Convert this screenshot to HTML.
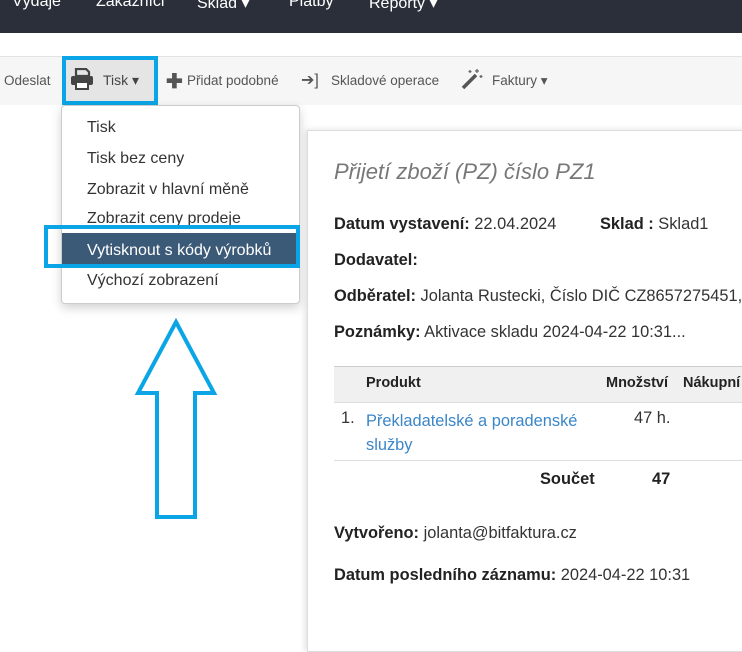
<!DOCTYPE html>
<html><head><meta charset="utf-8"><style>
body{margin:0;width:742px;height:627px;overflow:hidden;background:#fff;font-family:"Liberation Sans",sans-serif;position:relative;color:#333}
.nav{position:absolute;left:0;top:0;width:742px;height:33px;background:#2a2f3a;color:#fff;font-size:16px}
.nav span{position:absolute;top:-7px}
.tb{position:absolute;left:0;top:56px;width:742px;height:48px;background:#f6f6f6;border-top:1px solid #e3e3e3;font-size:13.5px;color:#555}
.tb span{position:absolute;top:16px}
.tisk{position:absolute;left:62px;top:56px;width:88px;height:41px;background:#e5e5e5;border:4px solid #0aa5e6;box-sizing:content-box}
.dd{position:absolute;left:61px;top:105px;width:237px;height:197px;background:#fff;border:1px solid #ccc;border-radius:4px;box-shadow:0 4px 10px rgba(0,0,0,.18);font-size:16px}
.dd div{position:absolute;left:25px}
.hl{position:absolute;left:62px;top:233px;width:236px;height:33px;background:#3b5a78}
.hlb{position:absolute;left:44px;top:225px;width:248px;height:35px;border:4px solid #0aa5e6}
.panel{position:absolute;left:307px;top:130px;width:460px;height:520px;background:#fff;border:1px solid #ddd;box-shadow:-2px 0 6px rgba(0,0,0,.12);font-size:16.4px}
.panel .t{position:absolute;white-space:nowrap}
b{font-weight:bold;color:#222}
</style></head><body>
<div class="nav"><span style="left:12px">Výdaje</span><span style="left:96px">Zákazníci</span><span style="left:197px">Sklad ▾</span><span style="left:289px">Platby</span><span style="left:369px">Reporty ▾</span></div>
<div class="tb">
<span style="left:4px">Odeslat</span>
<span style="left:166px;top:12px;font-size:20px;color:#555;font-weight:bold">✚</span><span style="left:187px">Přidat podobné</span>
<span style="left:301px;top:13px;font-size:16px">➔]</span><span style="left:331px">Skladové operace</span>
<span style="left:492px">Faktury ▾</span>
</div>
<svg style="position:absolute;left:460px;top:67px" width="24" height="24" viewBox="0 0 24 24"><path d="M3 21 L16 8" stroke="#555" stroke-width="3.5"/><path d="M17 2v4M15 4h4M21 8v3M19.5 9.5h3M10 3v3M8.5 4.5h3" stroke="#666" stroke-width="1.3"/></svg>
<div class="tisk"></div>
<svg style="position:absolute;left:70px;top:68px" width="24" height="22" viewBox="0 0 24 22"><path d="M6 1h10l3 3v4H6z" fill="none" stroke="#444" stroke-width="2.2"/><rect x="1" y="8" width="22" height="9" rx="2" fill="#444"/><rect x="6" y="14" width="12" height="7" fill="#fff" stroke="#444" stroke-width="2"/></svg>
<span style="position:absolute;left:103px;top:72px;font-size:14px;color:#444">Tisk ▾</span>
<div class="dd">
<div style="top:13px">Tisk</div><div style="top:44px">Tisk bez ceny</div><div style="top:75px">Zobrazit v hlavní měně</div><div style="top:104px">Zobrazit ceny prodeje</div><div style="top:166px">Výchozí zobrazení</div>
</div>
<div class="hl"></div>
<div style="position:absolute;left:87px;top:242px;color:#fff;font-size:16px">Vytisknout s kódy výrobků</div>
<div class="hlb"></div>
<svg style="position:absolute;left:130px;top:315px" width="95" height="210"><path d="M46 7 L84 78 L65 78 L65 202 L27 202 L27 78 L8 78 Z" fill="none" stroke="#0aa5e6" stroke-width="4"/></svg>
<div class="panel">
<div class="t" style="left:26px;top:28px;font-size:22px;font-style:italic;color:#777">Přijetí zboží (PZ) číslo PZ1</div>
<div class="t" style="left:26px;top:84px"><b>Datum vystavení:</b> 22.04.2024</div>
<div class="t" style="left:292px;top:84px"><b>Sklad :</b> Sklad1</div>
<div class="t" style="left:26px;top:120px"><b>Dodavatel:</b></div>
<div class="t" style="left:26px;top:156px"><b>Odběratel:</b> Jolanta Rustecki, Číslo DIČ CZ8657275451,</div>
<div class="t" style="left:26px;top:192px"><b>Poznámky:</b> Aktivace skladu 2024-04-22 10:31...</div>
<div style="position:absolute;left:26px;top:235px;width:440px;height:35px;background:#f0f0f0;border-top:1px solid #ccc;border-bottom:1px solid #ddd"></div>
<div class="t" style="left:58px;top:244px;font-size:14.5px"><b>Produkt</b></div>
<div class="t" style="left:298px;top:244px;font-size:14.5px"><b>Množství</b></div>
<div class="t" style="left:375px;top:244px;font-size:14.5px"><b>Nákupní</b></div>
<div class="t" style="left:33px;top:278px">1.</div>
<div class="t" style="left:58px;top:278px;color:#3a86c8;line-height:24px">Překladatelské a poradenské<br>služby</div>
<div class="t" style="left:326px;top:278px">47 h.</div>
<div style="position:absolute;left:26px;top:329px;width:440px;border-top:1px solid #ddd"></div>
<div class="t" style="left:232px;top:339px"><b>Součet</b></div>
<div class="t" style="left:344px;top:339px"><b>47</b></div>
<div class="t" style="left:26px;top:393px"><b>Vytvořeno:</b> jolanta@bitfaktura.cz</div>
<div class="t" style="left:26px;top:435px"><b>Datum posledního záznamu:</b> 2024-04-22 10:31</div>
</div>
</body></html>
